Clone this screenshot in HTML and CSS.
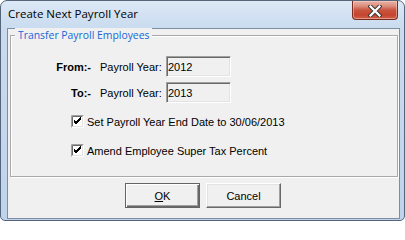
FILE: index.html
```html
<!DOCTYPE html>
<html>
<head>
<meta charset="utf-8">
<link rel="stylesheet" href="styles.css">
</head>
<body>
<div class="window">
  <div class="titlebar">
    <span class="title">Create Next Payroll Year</span>
    <div class="close">
      <svg width="14" height="12" viewBox="0 0 14 12">
        <path d="M2.5 1.5 L11.5 10.5 M11.5 1.5 L2.5 10.5" stroke="#3b3b3b" stroke-width="4.2" stroke-linecap="square" fill="none"/>
        <path d="M2.5 1.5 L11.5 10.5 M11.5 1.5 L2.5 10.5" stroke="#ffffff" stroke-width="2.2" stroke-linecap="square" fill="none"/>
      </svg>
    </div>
  </div>
  <div class="client">
    <div class="group">
      <span class="group-title">Transfer Payroll Employees</span>
      <div class="row">
        <span class="lbl">From:-</span>
        <span class="py">Payroll Year:</span>
        <input class="box" type="text" value="2012" readonly>
      </div>
      <div class="row row2">
        <span class="lbl">To:-</span>
        <span class="py">Payroll Year:</span>
        <input class="box" type="text" value="2013" readonly>
      </div>
      <div class="check check1">
        <svg class="cb" width="13" height="13" viewBox="0 0 13 13">
          <rect x="0" y="0" width="13" height="13" fill="#ffffff"/>
          <path d="M0.5 12.5 V0.5 H12.5" stroke="#a0a0a0" fill="none"/>
          <path d="M1.5 11.5 V1.5 H11.5" stroke="#696969" fill="none"/>
          <path d="M1.5 11.5 H11.5 V1.5" stroke="#e3e3e3" fill="none"/>
          <path d="M3 6 L5 8 L10 3 M3 7 L5 9 L10 4 M3 5 L5 7 L10 2" stroke="#000" stroke-width="1" fill="none"/>
        </svg>
        <span>Set Payroll Year End Date to 30/06/2013</span>
      </div>
      <div class="check check2">
        <svg class="cb" width="13" height="13" viewBox="0 0 13 13">
          <rect x="0" y="0" width="13" height="13" fill="#ffffff"/>
          <path d="M0.5 12.5 V0.5 H12.5" stroke="#a0a0a0" fill="none"/>
          <path d="M1.5 11.5 V1.5 H11.5" stroke="#696969" fill="none"/>
          <path d="M1.5 11.5 H11.5 V1.5" stroke="#e3e3e3" fill="none"/>
          <path d="M3 6 L5 8 L10 3 M3 7 L5 9 L10 4 M3 5 L5 7 L10 2" stroke="#000" stroke-width="1" fill="none"/>
        </svg>
        <span>Amend Employee Super Tax Percent</span>
      </div>
    </div>
    <div class="buttons">
      <button class="btn btn-default"><u>O</u>K</button>
      <button class="btn">Cancel</button>
    </div>
  </div>
</div>
</body>
</html>
```

FILE: styles.css
```css
html, body {
  margin: 0;
  padding: 0;
  background: #ffffff;
}
body {
  width: 405px;
  height: 221px;
  overflow: hidden;
}
.window {
  box-sizing: border-box;
  width: 405px;
  height: 221px;
  border: 1px solid #55667a;
  border-radius: 7px 7px 5px 5px;
  background: linear-gradient(to bottom, #dce8f6 0px, #c9dbef 28px, #bfd3ec 100%);
  display: flex;
  flex-direction: column;
  overflow: hidden;
}
.titlebar {
  height: 27px;
  display: flex;
  align-items: flex-start;
  flex-shrink: 0;
}
.title {
  font-family: "Open Sans", "Liberation Sans", sans-serif;
  font-size: 11.5px;
  color: #000;
  margin-left: 7px;
  margin-top: 5px;
  line-height: 16px;
  flex: 1;
}
.close {
  width: 44px;
  height: 18px;
  margin-right: 6px;
  border: 1px solid #7b2c20;
  border-top: none;
  border-radius: 0 0 4px 4px;
  background: linear-gradient(to bottom, #e8b3a7 0px, #dc8f7e 5px, #c9553f 9px, #c5442e 14px, #d06a52 19px);
  display: flex;
  align-items: center;
  justify-content: center;
  box-shadow: inset 0 0 0 1px rgba(255,220,210,0.45);
}
.close svg {
  display: block;
  margin-top: 1px;
}
.client {
  flex: 1;
  margin: 0 4px 1px 6px;
  border: 1px solid #7d8ea4;
  background: #f0f0f0;
  display: flex;
  flex-direction: column;
  font-family: "Liberation Sans", Arial, sans-serif;
  font-size: 11px;
  color: #000;
}
.group {
  position: relative;
  margin: 6px 1px 0 2px;
  border: 1px solid #a9a9a9;
  box-shadow: inset 1px 1px 0 #ffffff, 1px 1px 0 #ffffff;
  padding: 20px 0 19px 0;
  display: flex;
  flex-direction: column;
}
.group-title {
  position: absolute;
  top: -8px;
  left: 4px;
  padding: 0 3px;
  background: #f0f0f0;
  color: #1466d6;
  font-family: "Open Sans", "Liberation Sans", sans-serif;
  font-size: 10.4px;
  line-height: 15px;
}
.row {
  display: flex;
  align-items: center;
  height: 21px;
}
.row2 {
  margin-top: 5px;
}
.lbl {
  width: 80px;
  text-align: right;
  font-weight: bold;
}
.py {
  width: 66px;
  margin-left: 9px;
}
.box {
  box-sizing: border-box;
  width: 65px;
  height: 21px;
  margin: 0;
  padding: 0 0 0 1px;
  border: 1px solid;
  border-color: #a0a0a0 #ffffff #ffffff #a0a0a0;
  box-shadow: inset 1px 1px 0 #696969, inset -1px -1px 0 #e3e3e3;
  background: #f0f0f0;
  font-family: "Liberation Sans", Arial, sans-serif;
  font-size: 11px;
  color: #000;
  outline: none;
}
.check {
  display: flex;
  align-items: center;
  height: 13px;
  padding-left: 60px;
}
.check1 {
  margin-top: 12px;
}
.check2 {
  margin-top: 16px;
}
.cb {
  display: block;
  flex-shrink: 0;
  margin-right: 3px;
}
.buttons {
  display: flex;
  justify-content: flex-start;
  gap: 6px;
  margin-top: 6px;
  padding-left: 117px;
}
.btn {
  box-sizing: border-box;
  width: 75px;
  height: 25px;
  margin: 0;
  padding: 0;
  background: #f0f0f0;
  font-family: "Liberation Sans", Arial, sans-serif;
  font-size: 11px;
  color: #000;
  border: 1px solid;
  border-color: #ffffff #696969 #696969 #ffffff;
  box-shadow: inset -1px -1px 0 #a0a0a0, inset 1px 1px 0 #e3e3e3;
}
.btn-default {
  border: 1px solid #646464;
  box-shadow: inset 1px 1px 0 #ffffff, inset -1px -1px 0 #696969, inset -2px -2px 0 #a0a0a0;
}
```
